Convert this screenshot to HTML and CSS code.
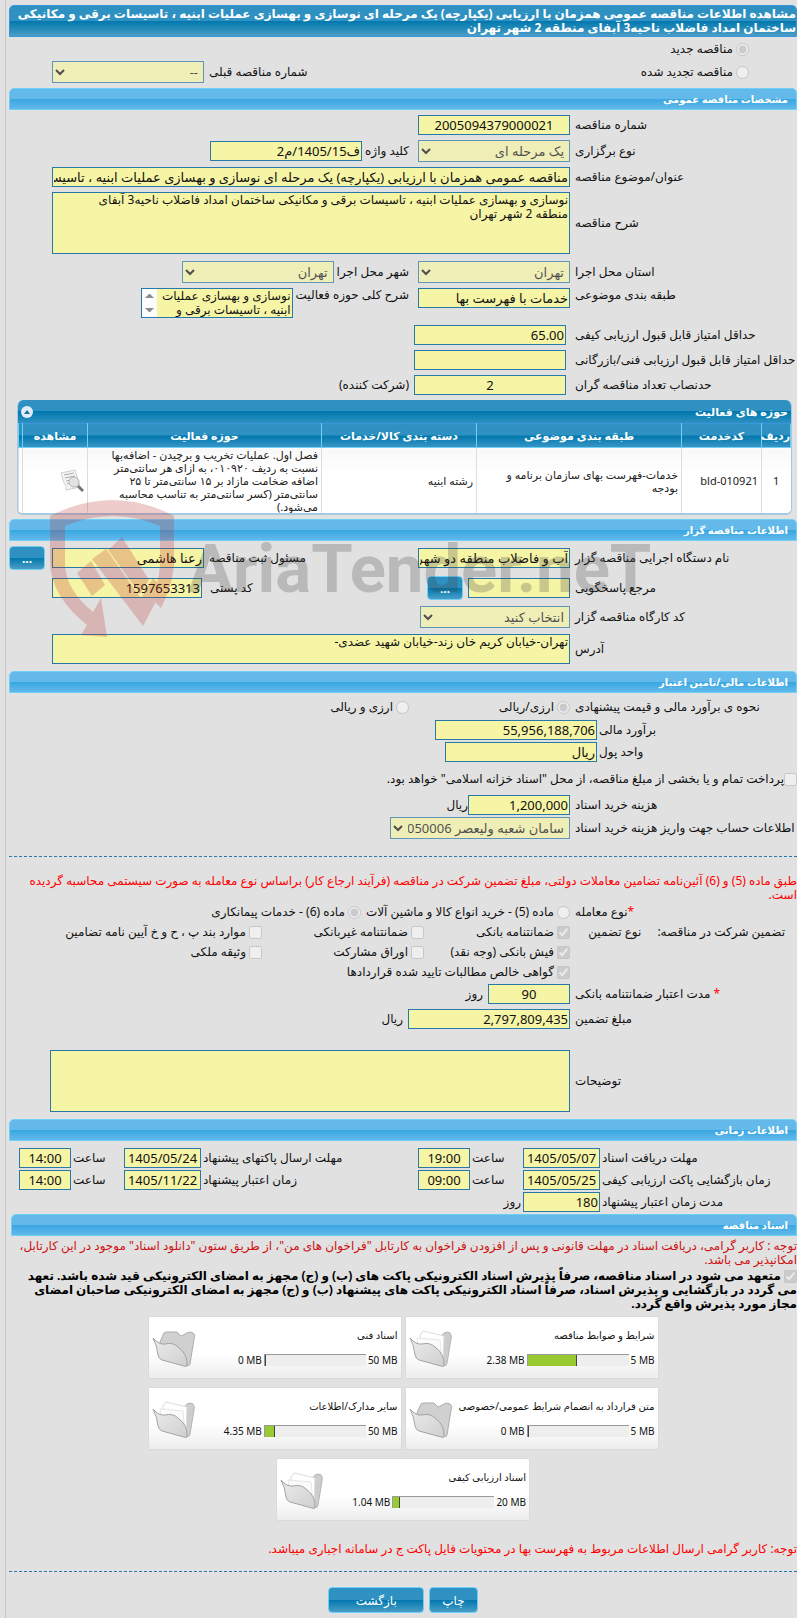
FILE: index.html
```html
<!DOCTYPE html>
<html lang="fa" dir="rtl">
<head>
    <meta charset="UTF-8">
    <meta name="viewport" content="width=device-width, initial-scale=1">
    <title>مشاهده اطلاعات مناقصه عمومی</title>
    <link rel="stylesheet" href="styles.css">
</head>
<body>
    <!-- icons -->
    <svg class="symbols" aria-hidden="true">
        <defs>
            <linearGradient id="folderFront" x1="0" y1="0" x2="1" y2="1">
                <stop offset="0" stop-color="#ececec"/>
                <stop offset="1" stop-color="#cfcfcf"/>
            </linearGradient>
        </defs>
        <symbol id="folder-empty" viewBox="0 0 44 38">
            <path d="M8 12 L12 3 Q13 2 15 2 L25 2 L29 6 L35 3 Q38 1 41 3 Q44 5 42 9 L38 34 Q37 37 35 35 L10 24 Z" fill="#d0d0d0" stroke="#adadad"/>
            <path d="M1 8 Q7 15 13 14 Q21 12 26 17 Q36 24 35 36 Q34 37 32 36 L10 30 Q7 29 6 25 Q5 15 1 8 Z" fill="url(#folderFront)" stroke="#a3a3a3"/>
        </symbol>
        <symbol id="folder-full" viewBox="0 0 44 38">
            <path d="M30 9 L35 3 Q38 1 41 3 Q43 5 42 9 L38 33 Q37 37 35 35 L28 28 Z" fill="#cdcdcd" stroke="#b5b5b5"/>
            <path d="M11 5 L14 1 L35 6 L34 31 L12 24 Z" fill="#fff" stroke="#dcdcdc"/>
            <path d="M8 8 L31 10 L33 30 L10 24 Z" fill="#fbfbfb" stroke="#e6e6e6"/>
            <path d="M1 8 Q7 15 13 14 Q21 12 26 17 Q36 24 35 36 Q34 37 32 36 L10 30 Q7 29 6 25 Q5 15 1 8 Z" fill="url(#folderFront)" stroke="#a3a3a3"/>
        </symbol>
    </svg>

    <form class="page">
        <h1 class="page-title">مشاهده اطلاعات مناقصه عمومی همزمان با ارزیابی (یکپارچه) یک مرحله ای نوسازی و بهسازی عملیات ابنیه ، تاسیسات برقی و مکانیکی ساختمان امداد فاضلاب ناحیه3 آبفای منطقه 2 شهر تهران</h1>

        <div class="kind">
            <div class="row">
                <label class="choice"><input type="radio" name="kind" checked disabled>مناقصه جدید</label>
            </div>
            <div class="row">
                <label class="choice"><input type="radio" name="kind" disabled>مناقصه تجدید شده</label>
                <div class="end-group">
                    <label for="prev">شماره مناقصه قبلی</label>
                    <select id="prev" class="field" disabled><option>--</option></select>
                </div>
            </div>
        </div>

        <!-- مشخصات -->
        <h2 class="bar">مشخصات مناقصه عمومی</h2>
        <div class="rows">
            <div class="row">
                <label class="label" for="number">شماره مناقصه</label>
                <input type="text" id="number" class="field center" value="2005094379000021" readonly>
            </div>
            <div class="row">
                <label class="label" for="method">نوع برگزاری</label>
                <select id="method" class="field" disabled><option>یک مرحله ای</option></select>
                <div class="next-group">
                    <label for="keyword">کلید واژه</label>
                    <input type="text" id="keyword" class="field" value="ف1405/15/م2" readonly>
                </div>
            </div>
            <div class="row">
                <label class="label" for="subject">عنوان/موضوع مناقصه</label>
                <input type="text" id="subject" class="field wide" value="مناقصه عمومی همزمان با ارزیابی (یکپارچه) یک مرحله ای نوسازی و بهسازی عملیات ابنیه ، تاسیسات برقی و مکانیکی ساختمان امداد فاضلاب" readonly>
            </div>
            <div class="row">
                <label class="label" for="details">شرح مناقصه</label>
                <textarea id="details" class="field wide tall" readonly>نوسازی و بهسازی عملیات ابنیه ، تاسیسات برقی و مکانیکی ساختمان امداد فاضلاب ناحیه3 آبفای منطقه 2 شهر تهران</textarea>
            </div>
            <div class="row spaced">
                <label class="label" for="province">استان محل اجرا</label>
                <select id="province" class="field" disabled><option>تهران</option></select>
                <div class="next-group">
                    <label for="city">شهر محل اجرا</label>
                    <select id="city" class="field" disabled><option>تهران</option></select>
                </div>
            </div>
            <div class="row top">
                <label class="label" for="category">طبقه بندی موضوعی</label>
                <input type="text" id="category" class="field" value="خدمات با فهرست بها" readonly>
                <div class="next-group">
                    <label for="scope">شرح کلی حوزه فعالیت</label>
                    <div class="scroll-box">
                        <textarea id="scope" class="field short" readonly>نوسازی و بهسازی عملیات ابنیه ، تاسیسات برقی و مکانیکی ساختمان امداد فاضلاب</textarea>
                        <svg class="scroll-bar" viewBox="0 0 15 28" aria-hidden="true"><path d="M3 9 L7 5 L8 5 L12 9 Z M3 19 L7 23 L8 23 L12 19 Z"/></svg>
                    </div>
                </div>
            </div>
            <div class="row spaced inset">
                <label class="label" for="quality">حداقل امتیاز قابل قبول ارزیابی کیفی</label>
                <input type="text" id="quality" class="field" value="65.00" readonly>
            </div>
            <div class="row inset">
                <label class="label" for="technical">حداقل امتیاز قابل قبول ارزیابی فنی/بازرگانی</label>
                <input type="text" id="technical" class="field" readonly>
            </div>
            <div class="row inset">
                <label class="label" for="quorum">حدنصاب تعداد مناقصه گران</label>
                <input type="text" id="quorum" class="field center" value="2" readonly>
                <span>(شرکت کننده)</span>
            </div>
        </div>

        <div class="grid-box">
            <div class="grid-head">
                <span>حوزه های فعالیت</span>
                <button type="button" class="toggle" aria-label="بستن">
                    <svg viewBox="0 0 12 12"><path d="M3 8 L6 4 L9 8 Z"/></svg>
                </button>
            </div>
            <table class="grid">
                <thead>
                    <tr>
                        <th class="col-no">ردیف</th>
                        <th class="col-code">کدخدمت</th>
                        <th class="col-subject">طبقه بندی موضوعی</th>
                        <th class="col-group">دسته بندی کالا/خدمات</th>
                        <th>حوزه فعالیت</th>
                        <th class="col-view">مشاهده</th>
                        <th class="col-stub"></th>
                    </tr>
                </thead>
                <tbody>
                    <tr>
                        <td class="mid">1</td>
                        <td>bld-010921</td>
                        <td>خدمات-فهرست بهای سازمان برنامه و بودجه</td>
                        <td>رشته ابنیه</td>
                        <td>فصل اول. عملیات تخریب و برچیدن - اضافه‌بها نسبت به ردیف ۰۱۰۹۲۰، به ازای هر سانتی‌متر اضافه ضخامت مازاد بر ۱۵ سانتی‌متر تا ۲۵ سانتی‌متر (کسر سانتی‌متر به تناسب محاسبه می‌شود.)</td>
                        <td>
                            <svg class="view-icon" viewBox="0 0 24 24" role="img" aria-label="مشاهده">
                                <path d="M1 4 L15 1 L20 18 L6 21 Q7 17 4 14 Z" fill="#f4f4f4" stroke="#cfcfcf"/>
                                <path d="M4 6 L14 4 M5 9 L15 7 M6 12 L11 11 M7 15 L10 14" stroke="#aaa" fill="none"/>
                                <circle cx="14" cy="13" r="5" fill="#e3e3e3" stroke="#b5b5b5"/>
                                <path d="M18 17 L23 22" stroke="#777" stroke-width="3"/>
                            </svg>
                        </td>
                        <td></td>
                    </tr>
                </tbody>
            </table>
        </div>

        <!-- مناقصه گزار -->
        <section class="owner">
            <h2 class="bar">اطلاعات مناقصه گزار</h2>
            <div class="rows">
                <div class="row">
                    <label class="label" for="agency">نام دستگاه اجرایی مناقصه گزار</label>
                    <input type="text" id="agency" class="field" value="آب و فاضلاب منطقه دو شهر تهران" readonly>
                    <div class="end-group to-edge">
                        <label for="person">مسئول ثبت مناقصه</label>
                        <input type="text" id="person" class="field" value="رعنا هاشمی" readonly>
                        <button type="button" class="btn more">...</button>
                    </div>
                </div>
                <div class="row">
                    <label class="label" for="contact">مرجع پاسخگویی</label>
                    <input type="text" id="contact" class="field w-100" readonly>
                    <button type="button" class="btn more">...</button>
                    <div class="end-group postal">
                        <label for="postal">کد پستی</label>
                        <input type="text" id="postal" class="field" value="1597653313" readonly>
                    </div>
                </div>
                <div class="row">
                    <label class="label" for="workshop">کد کارگاه مناقصه گزار</label>
                    <select id="workshop" class="field" disabled><option>انتخاب کنید</option></select>
                </div>
                <div class="row">
                    <label class="label" for="address">آدرس</label>
                    <textarea id="address" class="field wide short" readonly>تهران-خیابان کریم خان زند-خیابان شهید عضدی-</textarea>
                </div>
            </div>
            <div class="watermark" aria-hidden="true">
                <svg class="shield" viewBox="0 0 126 138">
                    <path d="M0 16 Q63 -16 124 16 V66 Q121 90 111 108 L101 98 Q109 84 110 64 V26 Q63 6 15 26 V66 Q17 91 43 112 L51 98 L57 137 L31 135 L37 125 Q2 97 0 64 Z"/>
                    <path d="M27 73 L41 61 L55 85 L42 96 Z"/>
                    <path d="M42 59 L56 49 L91 98 L103 78 L113 88 L93 126 Z"/>
                    <path d="M58 50 L72 37 L99 80 L90 94 Z"/>
                </svg>
                <span class="brand" dir="ltr">AriaTender.neT</span>
            </div>
        </section>

        <!-- مالی -->
        <h2 class="bar">اطلاعات مالی/تامین اعتبار</h2>
        <div class="rows finance">
            <div class="row">
                <span class="label">نحوه ی برآورد مالی و قیمت پیشنهادی</span>
                <label class="choice estimate"><input type="radio" name="currency" checked disabled>ارزی/ریالی</label>
                <label class="choice"><input type="radio" name="currency" disabled>ارزی و ریالی</label>
            </div>
            <div class="row">
                <label class="label near" for="amount">برآورد مالی</label>
                <input type="text" id="amount" class="field w-160" value="55,956,188,706" readonly>
            </div>
            <div class="row">
                <label class="label near" for="unit">واحد پول</label>
                <input type="text" id="unit" class="field" value="ریال" readonly>
            </div>
            <div class="row treasury">
                <label class="choice"><input type="checkbox" disabled>پرداخت تمام و یا بخشی از مبلغ مناقصه، از محل "اسناد خزانه اسلامی" خواهد بود.</label>
            </div>
            <div class="row">
                <label class="label" for="price">هزینه خرید اسناد</label>
                <input type="text" id="price" class="field w-100" value="1,200,000" readonly>
                <span class="unit">ریال</span>
            </div>
            <div class="row">
                <label class="label" for="account">اطلاعات حساب جهت واریز هزینه خرید اسناد</label>
                <select id="account" class="field w-180" disabled><option>سامان شعبه ولیعصر 80050006</option></select>
            </div>
        </div>

        <p class="note ruled">طبق ماده (5) و (6) آئین‌نامه تضامین معاملات دولتی، مبلغ تضمین شرکت در مناقصه (فرآیند ارجاع کار) براساس نوع معامله به صورت سیستمی محاسبه گردیده است.</p>

        <div class="deal">
            <span class="label"><span class="star">*</span>نوع معامله</span>
            <label class="choice"><input type="radio" name="deal" disabled>ماده (5) - خرید انواع کالا و ماشین آلات</label>
            <label class="choice"><input type="radio" name="deal" checked disabled>ماده (6) - خدمات پیمانکاری</label>
        </div>
        <div class="guarantee">
            <div class="guarantee-label"><span>تضمین شرکت در مناقصه:</span><span>نوع تضمین</span></div>
            <label class="choice"><input type="checkbox" checked disabled>ضمانتنامه بانکی</label>
            <label class="choice"><input type="checkbox" disabled>ضمانتنامه غیربانکی</label>
            <label class="choice"><input type="checkbox" disabled>موارد بند پ ، ح و خ آیین نامه تضامین</label>
            <label class="choice first"><input type="checkbox" checked disabled>فیش بانکی (وجه نقد)</label>
            <label class="choice"><input type="checkbox" disabled>اوراق مشارکت</label>
            <label class="choice"><input type="checkbox" disabled>وثیقه ملکی</label>
            <label class="choice first span"><input type="checkbox" checked disabled>گواهی خالص مطالبات تایید شده قراردادها</label>
        </div>
        <div class="rows after-guarantee">
            <div class="row">
                <label class="label" for="days"><span class="star">*</span> مدت اعتبار ضمانتنامه بانکی</label>
                <input type="text" id="days" class="field w-80 center" value="90" readonly>
                <span>روز</span>
            </div>
            <div class="row">
                <label class="label" for="bond">مبلغ تضمین</label>
                <input type="text" id="bond" class="field w-160" value="2,797,809,435" readonly>
                <span>ریال</span>
            </div>
            <div class="row remarks">
                <label class="label" for="remarks">توضیحات</label>
                <textarea id="remarks" class="field wide tall" readonly></textarea>
            </div>
        </div>

        <!-- زمانی -->
        <h2 class="bar">اطلاعات زمانی</h2>
        <div class="times">
            <label for="d1">مهلت دریافت اسناد</label>
            <input type="text" id="d1" class="field center" value="1405/05/07" dir="ltr" readonly>
            <label for="t1">ساعت</label>
            <input type="text" id="t1" class="field center" value="19:00" dir="ltr" readonly>
            <label for="d2">مهلت ارسال پاکتهای پیشنهاد</label>
            <input type="text" id="d2" class="field center" value="1405/05/24" dir="ltr" readonly>
            <label for="t2">ساعت</label>
            <input type="text" id="t2" class="field center" value="14:00" dir="ltr" readonly>

            <label for="d3">زمان بازگشایی پاکت ارزیابی کیفی</label>
            <input type="text" id="d3" class="field center" value="1405/05/25" dir="ltr" readonly>
            <label for="t3">ساعت</label>
            <input type="text" id="t3" class="field center" value="09:00" dir="ltr" readonly>
            <label for="d4">زمان اعتبار پیشنهاد</label>
            <input type="text" id="d4" class="field center" value="1405/11/22" dir="ltr" readonly>
            <label for="t4">ساعت</label>
            <input type="text" id="t4" class="field center" value="14:00" dir="ltr" readonly>

            <label for="d5">مدت زمان اعتبار پیشنهاد</label>
            <input type="text" id="d5" class="field" value="180" readonly>
            <span class="day">روز</span>
        </div>

        <!-- اسناد -->
        <h2 class="bar docs-bar">اسناد مناقصه</h2>
        <p class="note dark">توجه : کاربر گرامی، دریافت اسناد در مهلت قانونی و پس از افزودن فراخوان به کارتابل "فراخوان های من"، از طریق ستون "دانلود اسناد" موجود در این کارتابل، امکانپذیر می باشد.</p>
        <label class="pledge"><input type="checkbox" checked disabled> متعهد می شود در اسناد مناقصه، صرفاً پذیرش اسناد الکترونیکی پاکت های (ب) و (ج) مجهز به امضای الکترونیکی قید شده باشد. تعهد می گردد در بازگشایی و پذیرش اسناد، صرفاً اسناد الکترونیکی پاکت های پیشنهاد (ب) و (ج) مجهز به امضای الکترونیکی صاحبان امضای مجاز مورد پذیرش واقع گردد.</label>

        <div class="docs">
            <article class="doc">
                <div class="doc-body">
                    <h3>شرایط و ضوابط مناقصه</h3>
                    <div class="usage"><span dir="ltr">5 MB</span><div class="meter"><div class="fill" style="width: 48%"></div></div><span dir="ltr">2.38 MB</span></div>
                </div>
                <svg class="folder"><use href="#folder-full"/></svg>
            </article>
            <article class="doc">
                <div class="doc-body">
                    <h3>اسناد فنی</h3>
                    <div class="usage"><span dir="ltr">50 MB</span><div class="meter"><div class="fill" style="width: 0%"></div></div><span dir="ltr">0 MB</span></div>
                </div>
                <svg class="folder"><use href="#folder-empty"/></svg>
            </article>
            <article class="doc">
                <div class="doc-body">
                    <h3>متن قرارداد به انضمام شرایط عمومی/خصوصی</h3>
                    <div class="usage"><span dir="ltr">5 MB</span><div class="meter"><div class="fill" style="width: 0%"></div></div><span dir="ltr">0 MB</span></div>
                </div>
                <svg class="folder"><use href="#folder-empty"/></svg>
            </article>
            <article class="doc">
                <div class="doc-body">
                    <h3>سایر مدارک/اطلاعات</h3>
                    <div class="usage"><span dir="ltr">50 MB</span><div class="meter"><div class="fill" style="width: 9%"></div></div><span dir="ltr">4.35 MB</span></div>
                </div>
                <svg class="folder"><use href="#folder-full"/></svg>
            </article>
            <article class="doc">
                <div class="doc-body">
                    <h3>اسناد ارزیابی کیفی</h3>
                    <div class="usage"><span dir="ltr">20 MB</span><div class="meter"><div class="fill" style="width: 6%"></div></div><span dir="ltr">1.04 MB</span></div>
                </div>
                <svg class="folder"><use href="#folder-full"/></svg>
            </article>
        </div>

        <p class="note last">توجه: کاربر گرامی ارسال اطلاعات مربوط به فهرست بها در محتویات فایل پاکت ج در سامانه اجباری میباشد.</p>

        <div class="actions">
            <button type="button" class="btn">چاپ</button>
            <button type="button" class="btn back">بازگشت</button>
        </div>
    </form>
</body>
</html>
```
FILE: styles.css
```css
* {
    box-sizing: border-box;
}

body {
    margin: 0;
    background-color: #e1e1e1;
    color: #111;
    font-family: Tahoma, "Noto Sans", "DejaVu Sans", sans-serif;
    font-size: 12px;
    line-height: 14px;
    overflow-x: hidden;
}

h1, h2, h3, p {
    margin: 0;
}

.symbols {
    position: absolute;
    width: 0;
    height: 0;
}

.page {
    min-height: 100vh;
    margin-left: 5px;
    padding: 5px 0 0 3px;
    border-left: 1px solid #c6c6c6;
}

/* headings */
.page-title {
    min-height: 32px;
    padding: 1px 0 0;
    border: 1px solid #3a96dc;
    border-radius: 5px 5px 0 0;
    background: linear-gradient(#2e91c1 50%, #0078ae 50%, #4a9dc6);
    color: #fff;
    font-size: 12px;
    line-height: 14px;
    font-weight: bold;
}

.bar {
    height: 22px;
    padding: 0 8px;
    border: 1px solid #6fd0f6;
    border-radius: 5px 5px 0 0;
    background: linear-gradient(#62b9ea 50%, #38a6e1 50%, #62b9ea);
    color: #fff;
    font-size: 10px;
    line-height: 20px;
    font-weight: bold;
}

/* controls */
.field {
    flex: none;
    width: 152px;
    height: 20px;
    margin: 0;
    padding: 0 1px;
    border: 1px solid #2779aa;
    border-radius: 0;
    background-color: #f6f4a5;
    color: #111;
    font-family: inherit;
    font-size: 13px;
}

select.field {
    height: 22px;
    opacity: 0.7;
}

textarea.field {
    font-size: 12px;
    line-height: 14px;
    resize: none;
    overflow: hidden;
}

.field.wide {
    flex: 1;
    min-width: 0;
}

.field.tall {
    height: 62px;
    padding-left: 24px;
}

.field.short {
    height: 30px;
}

.field.w-80 {
    width: 82px;
}

.field.w-100 {
    width: 102px;
}

.field.w-160 {
    width: 162px;
}

.field.w-180 {
    width: 180px;
}

.center {
    text-align: center;
}

/* scroll strip over the textarea edge */
.scroll-box {
    position: relative;
}

.scroll-box .field {
    display: block;
    padding-left: 16px;
}

.scroll-bar {
    position: absolute;
    top: 1px;
    left: 1px;
    width: 15px;
    height: 28px;
    background-color: #fcfcfc;
    fill: #8b8b8b;
}

input[type="radio"],
input[type="checkbox"] {
    flex: none;
    width: 13px;
    height: 13px;
    margin: 0;
}

.choice {
    display: flex;
    align-items: center;
    gap: 3px;
    white-space: nowrap;
}

.btn {
    height: 26px;
    padding: 0 12px;
    border: 1px solid #6fd0f6;
    border-radius: 4px;
    background: linear-gradient(#2e91c1 50%, #0078ae 50%, #4a9dc6);
    color: #fff;
    font-family: inherit;
    font-size: 12px;
}

.btn.more {
    width: 36px;
    height: 24px;
    padding: 0;
    font-weight: bold;
}

/* rows */
.kind {
    display: flex;
    flex-direction: column;
    gap: 1px;
    padding: 1px 48px 5px 43px;
}

.rows {
    display: flex;
    flex-direction: column;
    gap: 5px;
    padding: 5px 0 5px 43px;
}

.row {
    display: flex;
    align-items: center;
    gap: 5px;
    white-space: nowrap;
}

.kind .row {
    min-height: 22px;
}

.row.top,
.row.top .next-group {
    align-items: flex-start;
}

.row.spaced {
    margin-top: 2px;
}

.label {
    flex: none;
    width: 222px;
    text-align: left;
}

.inset .label {
    margin-left: 4px;
}

.next-group,
.end-group {
    display: flex;
    align-items: center;
    gap: 3px;
}

.next-group {
    margin-right: 4px;
}

.end-group {
    gap: 5px;
    margin-right: auto;
}

.end-group.to-edge {
    margin-left: -43px;
}

.end-group .more {
    margin-right: 2px;
}

/* activity table */
.grid-box {
    margin: 0 5px 4px 8px;
    border: 2px solid #a5c9e1;
    border-width: 0 1px 2px;
    border-radius: 6px;
    overflow: hidden;
    background-color: #fff;
}

.grid-head {
    display: flex;
    align-items: center;
    justify-content: space-between;
    height: 23px;
    padding: 0 3px;
    background: linear-gradient(#2e91c1 50%, #0078ae 50%, #2e91c1);
    color: #fff;
    font-size: 11px;
    font-weight: bold;
}

.toggle {
    width: 12px;
    height: 12px;
    padding: 0;
    border: 0;
    border-radius: 6px;
    background-color: #e0edf8;
}

.toggle svg {
    display: block;
    fill: #1b6fa0;
}

.grid {
    width: 100%;
    border-collapse: collapse;
    table-layout: fixed;
}

.grid th {
    height: 24px;
    padding: 0;
    border: 1px solid #6fd0f6;
    border-top-color: #3a96dc;
    background: linear-gradient(#2e91c1 50%, #0078ae 50%, #3a96c6);
    color: #fff;
    font-size: 11px;
    font-weight: bold;
}

.grid td {
    height: 65px;
    padding: 0 3px;
    border-left: 1px solid #ddd;
    background: linear-gradient(#f8f8f8, #fff 40%);
    color: #222;
    font-size: 11px;
    line-height: 13px;
}

.grid td.mid {
    text-align: center;
}

.col-no {
    width: 29px;
}

.col-code {
    width: 80px;
}

.col-subject {
    width: 205px;
}

.col-group {
    width: 155px;
}

.col-view {
    width: 65px;
}

.col-stub {
    width: 4px;
}

.view-icon {
    display: block;
    width: 24px;
    height: 24px;
}

/* owner */
.owner {
    position: relative;
}

.owner .rows {
    gap: 6px;
    padding-bottom: 7px;
}

.postal {
    gap: 8px;
}

.postal .field,
#workshop {
    width: 150px;
}

.watermark {
    position: absolute;
    top: -19px;
    left: 41px;
    display: flex;
    direction: ltr;
    align-items: center;
    gap: 12px;
    pointer-events: none;
}

.shield {
    width: 126px;
    height: 138px;
    fill: #be2d2d;
    opacity: 0.24;
}

.brand {
    color: rgba(60, 60, 60, 0.24);
    font-family: Roboto, "Liberation Sans", sans-serif;
    font-size: 67px;
    line-height: 80px;
    font-weight: bold;
}

/* finance */
.finance {
    gap: 2px;
    padding: 3px 0 17px;
}

.finance .row:first-child {
    min-height: 22px;
}

.finance .near {
    width: 198px;
    margin-left: -3px;
}

.estimate {
    width: 156px;
}

.treasury {
    min-height: 18px;
    margin: 6px 0 5px;
}

.treasury .choice {
    gap: 0;
}

.unit {
    margin-right: -5px;
}

.note {
    color: #f00;
    padding: 3px 0 2px;
}

.note.dark {
    color: #cf1010;
}

.note.ruled {
    padding: 17px 0 0;
    border-top: 1px dashed #2779aa;
}

.star {
    color: #f00;
}

.deal {
    display: flex;
    align-items: center;
    gap: 5px;
    min-height: 20px;
}

.guarantee {
    display: grid;
    grid-template-columns: 222px 141px 157px 1fr;
    grid-auto-rows: 20px;
    column-gap: 5px;
    align-items: center;
}

.guarantee-label {
    display: flex;
    gap: 16px;
    padding-right: 12px;
    white-space: nowrap;
}

.guarantee .first {
    grid-column-start: 2;
}

.guarantee .span {
    grid-column-end: span 3;
}

.after-guarantee {
    padding: 2px 0 7px 41px;
}

.remarks {
    margin-top: 16px;
}

/* times */
.times {
    display: grid;
    grid-template-columns: 195px 77px 49px 52px 213px 77px 49px 52px;
    gap: 2px;
    align-items: center;
    padding: 7px 0 2px;
    text-align: left;
}

.times .field {
    width: 100%;
}

.times #d5 {
    text-align: right;
}

.day {
    text-align: right;
}

.docs-bar {
    margin-left: 2px;
}

.pledge {
    display: block;
    padding-bottom: 5px;
    color: #000;
    font-weight: bold;
}

.pledge input {
    vertical-align: middle;
}

/* documents */
.docs {
    display: flex;
    flex-wrap: wrap;
    justify-content: center;
    gap: 8px 3px;
    max-width: 520px;
    margin: 0 auto;
}

.doc {
    display: flex;
    justify-content: space-between;
    width: 254px;
    height: 63px;
    padding: 0 3px;
    border: 1px solid #dadada;
    background: linear-gradient(#fff 60%, #ededed);
}

.doc h3 {
    padding-top: 11px;
    font-size: 10px;
    font-weight: normal;
    white-space: nowrap;
}

.doc-body {
    flex: 1;
    min-width: 0;
}

.usage {
    display: flex;
    align-items: center;
    gap: 2px;
    padding-top: 11px;
    font-size: 10px;
    line-height: 14px;
    white-space: nowrap;
}

.meter {
    display: flex;
    direction: ltr;
    width: 102px;
    height: 12px;
    border-top: 1px solid #999;
    border-left: 1px solid #999;
    background-color: #eee;
}

.fill {
    box-sizing: content-box;
    border-right: 1px solid #444;
    background-color: #9aca32;
}

.folder {
    flex: none;
    width: 44px;
    height: 38px;
    margin-top: 13px;
}

.note.last {
    padding: 21px 0 15px;
}

.actions {
    display: flex;
    justify-content: center;
    gap: 5px;
    padding: 15px 0 4px;
    border-top: 1px dashed #2779aa;
}

.actions .back {
    width: 96px;
}
```
